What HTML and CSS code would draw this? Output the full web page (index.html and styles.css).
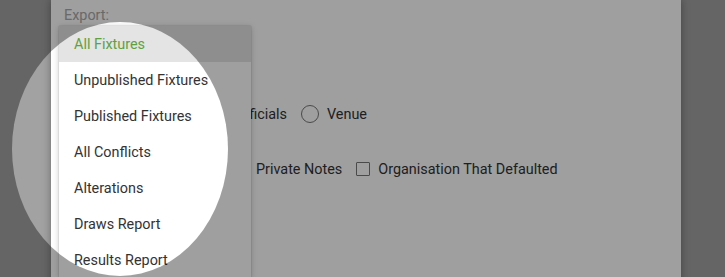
FILE: index.html
```html
<!DOCTYPE html>
<html>
<head>
<meta charset="utf-8">
<link rel="stylesheet" href="styles.css">
</head>
<body>
<div class="page">
  <div class="modal">
    <div class="label">Export:</div>
    <div class="select">All Fixtures</div>
    <div class="opts radios">
      <label class="opt"><span class="radio"></span>Officials</label>
      <label class="opt"><span class="radio"></span>Venue</label>
    </div>
    <div class="opts checks">
      <label class="opt"><span class="check"></span>Private Notes</label>
      <label class="opt"><span class="check"></span>Organisation That Defaulted</label>
    </div>
  </div>
  <ul class="menu">
    <li class="item active">All Fixtures</li>
    <li class="item">Unpublished Fixtures</li>
    <li class="item">Published Fixtures</li>
    <li class="item">All Conflicts</li>
    <li class="item">Alterations</li>
    <li class="item">Draws Report</li>
    <li class="item">Results Report</li>
  </ul>
  <div class="spotlight"></div>
</div>
</body>
</html>
```

FILE: styles.css
```css
html, body {
  margin: 0;
  padding: 0;
  height: 277px;
  overflow: hidden;
}
body {
  font-family: Roboto, "Liberation Sans", sans-serif;
  font-size: 14.4px;
  color: #333;
}
.page {
  position: relative;
  height: 277px;
  background: #a2a2a2;
  padding-left: 51px;
  overflow: hidden;
}
.modal {
  width: 604px;
  height: 277px;
  background: #fff;
  box-shadow: 0 0 8px rgba(0, 0, 0, 0.35);
  padding: 7px 13px 0;
}
.label {
  line-height: 18px;
  color: #a8a8a8;
}
.select {
  margin-top: 1px;
  height: 36px;
  line-height: 36px;
  padding-left: 10px;
}
.opts {
  display: flex;
  align-items: center;
  gap: 14px;
  height: 24px;
}
.radios {
  margin-top: 40px;
  padding-left: 145px;
}
.checks {
  margin-top: 31px;
  padding-left: 170px;
}
.opt {
  display: flex;
  align-items: center;
  gap: 8px;
  white-space: nowrap;
}
.radio {
  width: 16px;
  height: 16px;
  border: 1px solid #777;
  border-radius: 50%;
}
.check {
  width: 12px;
  height: 12px;
  border: 1px solid #777;
  border-radius: 1px;
}
.menu {
  position: absolute;
  left: 59px;
  top: 26px;
  width: 192px;
  margin: 0;
  padding: 0;
  list-style: none;
  background: #fff;
  box-shadow: 0 1px 6px rgba(0, 0, 0, 0.22), 0 0 1px rgba(0, 0, 0, 0.3);
}
.item {
  height: 34px;
  padding-top: 2px;
  line-height: 34px;
  padding-left: 15px;
  color: #333;
}
.item.active {
  background: #e4e4e4;
  color: #5fa13c;
}
.spotlight {
  position: absolute;
  left: 12px;
  top: 22px;
  width: 216px;
  height: 254px;
  border-radius: 50%;
  box-shadow: 0 0 0 1200px rgba(0, 0, 0, 0.375);
  pointer-events: none;
}
```
